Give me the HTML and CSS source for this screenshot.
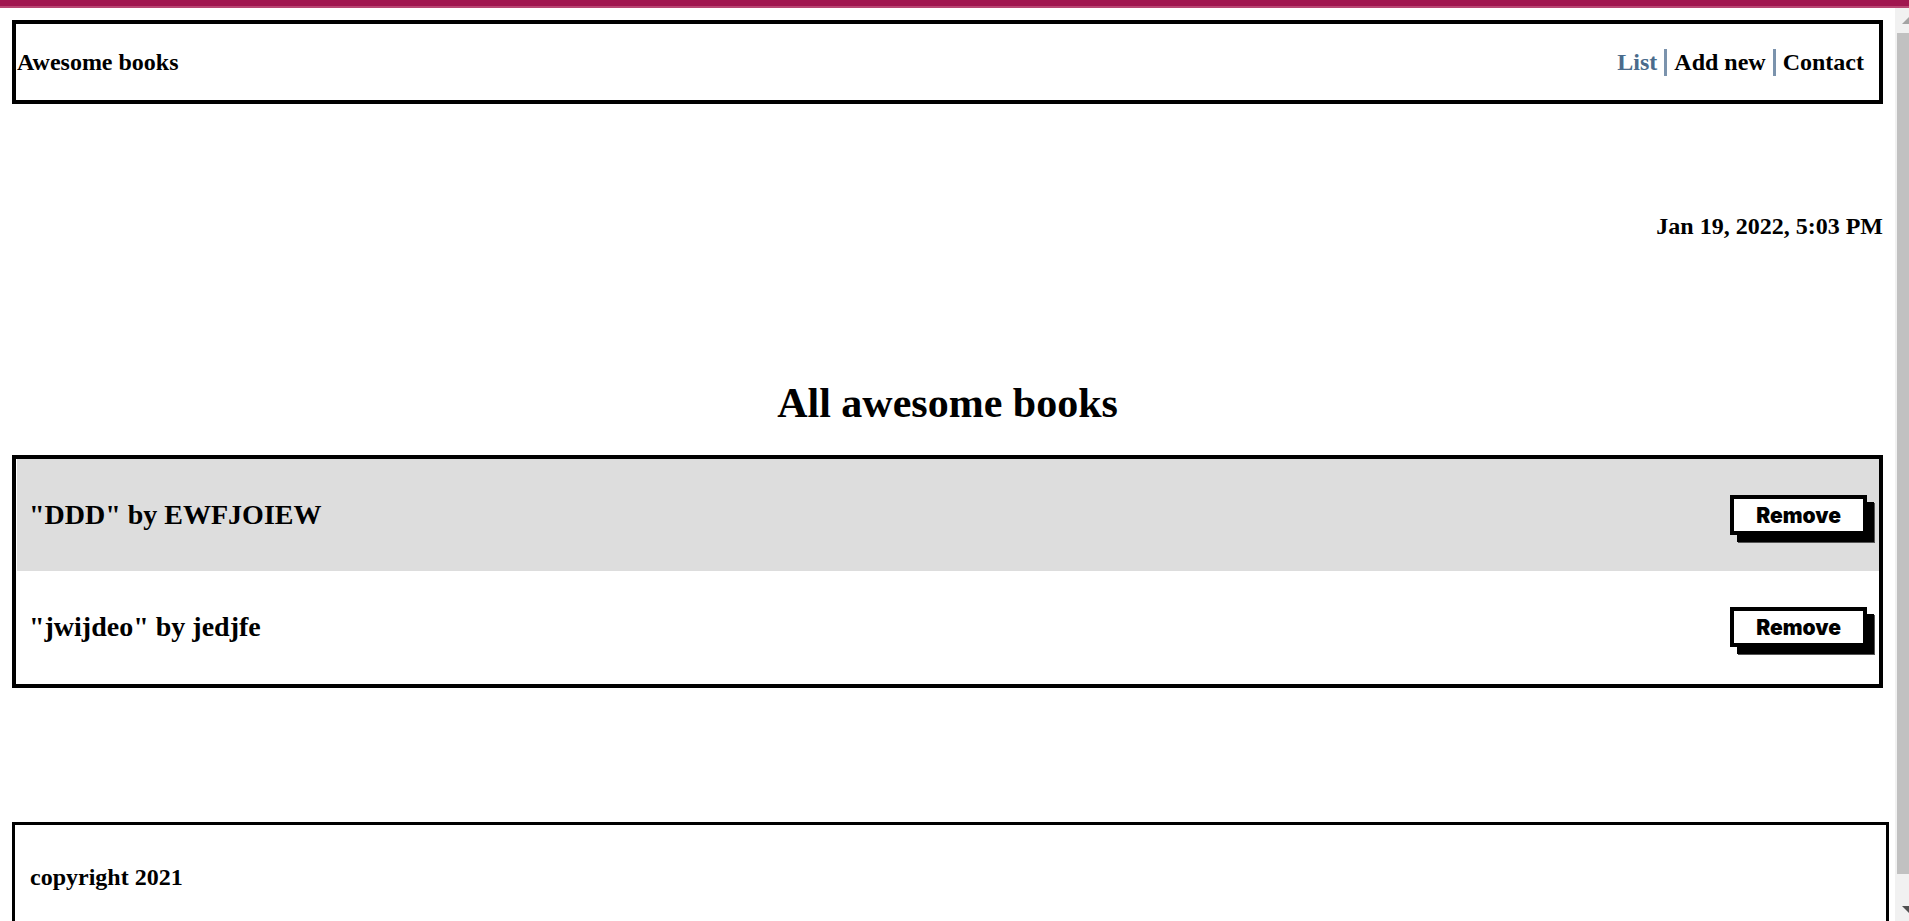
FILE: index.html
```html
<!DOCTYPE html>
<html lang="en">
<head>
<meta charset="utf-8">
<title>Awesome books</title>
<link rel="stylesheet" href="styles.css">
</head>
<body>
<div class="accent"></div>
<div class="viewport">
  <div class="page">
    <header class="header">
      <h3 class="brand">Awesome books</h3>
      <nav class="nav">
        <a class="nav-link active" href="#list">List</a>
        <span class="divider"></span>
        <a class="nav-link" href="#add">Add new</a>
        <span class="divider"></span>
        <a class="nav-link" href="#contact">Contact</a>
      </nav>
    </header>
    <p class="date">Jan 19, 2022, 5:03 PM</p>
    <main id="list">
      <h1 class="title">All awesome books</h1>
      <ul class="books">
        <li class="book"><span>"DDD" by EWFJOIEW</span><button class="remove" type="button">Remove</button></li>
        <li class="book"><span>"jwijdeo" by jedjfe</span><button class="remove" type="button">Remove</button></li>
      </ul>
    </main>
    <footer class="footer"><p class="copyright">copyright 2021</p></footer>
  </div>
  <div class="scrollbar" aria-hidden="true">
    <svg class="arrow" width="14" height="25" viewBox="0 0 14 25"><path d="M7 16 L14 9 V16 Z" fill="#a3a3a3"/></svg>
    <div class="track"><div class="thumb"></div></div>
    <svg class="arrow" width="14" height="25" viewBox="0 0 14 25"><path d="M7 10 H14 V17 Z" fill="#505050"/></svg>
  </div>
</div>
</body>
</html>
```

FILE: styles.css
```css
* {
  box-sizing: border-box;
  margin: 0;
  padding: 0;
}

body {
  display: flex;
  flex-direction: column;
  height: 100vh;
  overflow: hidden;
  background: #fff;
  color: #000;
  font: bold 24px/28px "Liberation Serif", "Times New Roman", serif;
}

.accent {
  flex: none;
  height: 8px;
  background: #a0164f;
  border-bottom: 2px solid #b94673;
}

.viewport {
  display: flex;
  flex: 1;
  min-height: 0;
}

.page {
  flex: 1;
  padding: 12px 12px 0;
  overflow: hidden;
}

.header {
  display: flex;
  align-items: center;
  justify-content: space-between;
  padding: 24px 15px 24px 1px;
  border: 4px solid #000;
}

.brand {
  font-size: 24px;
}

.nav {
  display: flex;
  align-items: center;
  gap: 7px;
}

.nav-link {
  color: #000;
  text-decoration: none;
}

.nav-link.active {
  color: #4a6b8c;
}

.divider {
  width: 3px;
  height: 27px;
  background: #7b93ad;
}

.date {
  margin-top: 108px;
  text-align: right;
}

.title {
  margin: 139px 0 28px;
  font-size: 42px;
  line-height: 48px;
  text-align: center;
}

.books {
  padding: 0 0 1px 1px;
  border: 4px solid #000;
  list-style: none;
}

.book {
  display: flex;
  align-items: center;
  justify-content: space-between;
  padding: 36px 12px;
  font-size: 28px;
}

.book:nth-child(odd) {
  background: #ddd;
}

.remove {
  height: 40px;
  padding: 2px 22px 0;
  background: #fff;
  border: 4px solid #000;
  box-shadow: 7px 7px 0 #000, 8px 8px 0 #555;
  color: #000;
  font: 900 21px/30px Inter, sans-serif;
}

.footer {
  margin: 134px -6px 0 0;
  padding: 38px 15px;
  border: 3px solid #000;
}

.scrollbar {
  display: flex;
  flex: none;
  flex-direction: column;
  width: 14px;
  background: #f1f1f1;
}

.arrow {
  display: block;
  flex: none;
}

.track {
  flex: 1;
  padding-left: 2px;
}

.thumb {
  height: 97.5%;
  background: #c1c1c1;
}
```
